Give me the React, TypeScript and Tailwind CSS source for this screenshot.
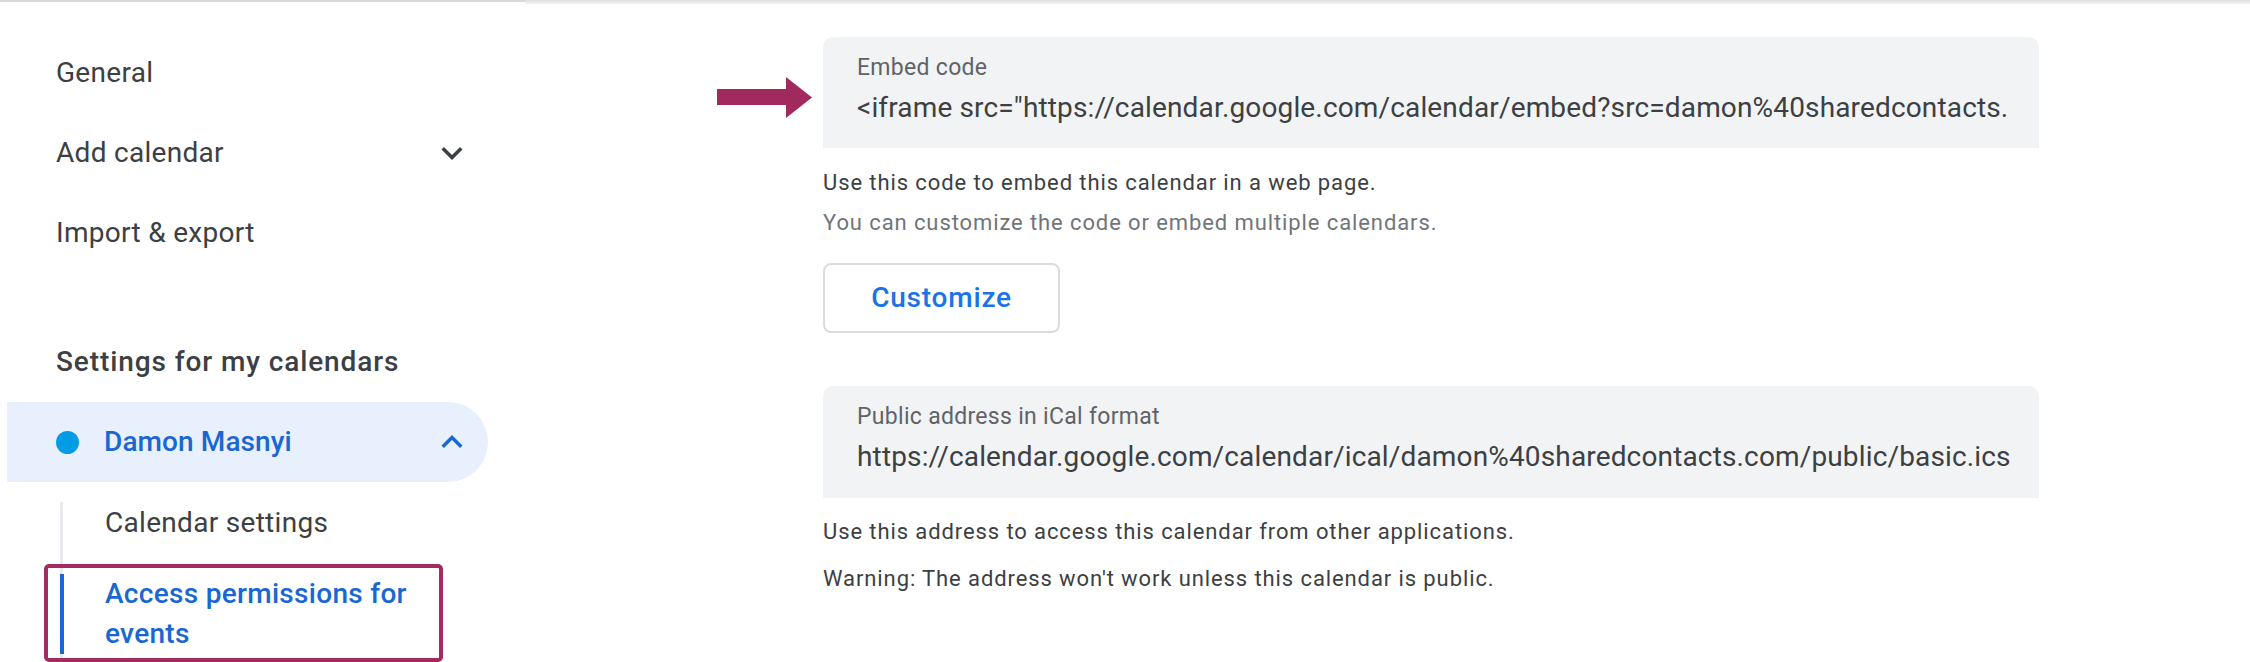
import React from "react";

const ChevronDown = ({ className }: { className?: string }) => (
  <svg viewBox="0 0 24 24" className={className} fill="currentColor">
    <path d="M16.59 8.59L12 13.17 7.41 8.59 6 10l6 6 6-6z" />
  </svg>
);

const ChevronUp = ({ className }: { className?: string }) => (
  <svg viewBox="0 0 24 24" className={className} fill="currentColor">
    <path d="M12 8l-6 6 1.41 1.41L12 10.83l4.59 4.58L18 14z" />
  </svg>
);

const Arrow = () => (
  <svg viewBox="0 0 95 41" className="w-[95px] h-[41px]">
    <rect x="0" y="12" width="70" height="16" fill="#a1295e" />
    <polygon points="69,0 95,20.5 69,41" fill="#a1295e" />
  </svg>
);

export default function App() {
  return (
    <div
      className="w-[2250px] h-[662px] bg-white overflow-hidden text-[#3c4043]"
      style={{ fontFamily: "Roboto, 'Liberation Sans', sans-serif" }}
    >
      <div className="flex h-[4px]">
        <div className="w-[525px] h-[2px] bg-[#d9d9dc]" />
        <div className="flex-1 h-[4px] bg-gradient-to-b from-[#dedee1] to-[#f4f4f6]" />
      </div>
      <div className="flex">
        {/* Left nav */}
        <div className="w-[823px] shrink-0 relative">
          <div className="w-[488px] pt-[29px] tracking-[0.3px]">
            <div className="h-[80px] flex items-center pl-[56px] text-[28px]">General</div>
            <div className="h-[80px] flex items-center justify-between pl-[56px] pr-[15px] text-[28px]">
              <span>Add calendar</span>
              <ChevronDown className="w-[42px] h-[42px] text-[#3c4043]" />
            </div>
            <div className="h-[80px] flex items-center pl-[56px] text-[28px]">Import &amp; export</div>
            <div className="h-[49px]" />
            <div className="h-[80px] flex items-center pl-[56px] text-[28px] font-medium tracking-[0.9px]">
              Settings for my calendars
            </div>
            <div className="ml-[7px] h-[80px] rounded-r-full bg-[#e8f0fe] flex items-center pl-[49px] pr-[15px]">
              <div className="w-[23px] h-[23px] rounded-full bg-[#039be5] shrink-0" />
              <span className="ml-[25px] text-[28px] font-medium text-[#1967d2] flex-1 tracking-[0.1px]">Damon Masnyi</span>
              <ChevronUp className="w-[42px] h-[42px] text-[#1967d2]" />
            </div>
            <div className="mt-[20px] ml-[60px] border-l-[3px] border-[#e8eaed] h-[200px]">
              <div className="h-[72px] pt-[1px] pl-[42px] text-[28px] leading-[40px]">Calendar settings</div>
              <div className="-ml-[3px] border-l-[4px] border-[#1967d2] pl-[41px] w-[380px] text-[28px] leading-[40px] font-medium text-[#1967d2]">
                Access permissions for events
              </div>
            </div>
          </div>
          <div className="absolute left-[44px] top-[560px] w-[399px] h-[98px] border-[4px] border-[#a32b5f] rounded-[5px]" />
        </div>

        {/* Right content */}
        <div className="w-[1216px] pt-[33px]">
          <div className="relative h-[111px] bg-[#f1f3f4] rounded-t-[10px] pl-[34px] pr-[20px] flex flex-col">
            <div className="absolute left-[-106px] top-[40px]">
              <Arrow />
            </div>
            <div className="mt-[18px] h-[26px] leading-[26px] text-[23px] tracking-[0.3px] text-[#5f6368]">Embed code</div>
            <div className="mt-[7px] h-[40px] leading-[40px] text-[28px] tracking-[0.15px] text-[#3c4043] whitespace-nowrap overflow-hidden">
              &lt;iframe src="https://calendar.google.com/calendar/embed?src=damon%40sharedcontacts.
            </div>
          </div>
          <div className="mt-[15px] text-[22px] leading-[40px] tracking-[0.9px] text-[#3c4043]">
            Use this code to embed this calendar in a web page.
          </div>
          <div className="text-[22px] leading-[40px] tracking-[0.9px] text-[#70757a]">
            You can customize the code or embed multiple calendars.
          </div>
          <div className="mt-[20px] w-[237px] h-[70px] border-[2px] border-[#dadce0] rounded-[8px] flex items-center justify-center text-[28px] tracking-[0.8px] font-medium text-[#1a73e8]">
            Customize
          </div>
          <div className="mt-[53px] h-[112px] bg-[#f1f3f4] rounded-t-[10px] pl-[34px] pr-[20px] flex flex-col">
            <div className="mt-[18px] h-[26px] leading-[26px] text-[23px] tracking-[0.3px] text-[#5f6368]">Public address in iCal format</div>
            <div className="mt-[7px] h-[40px] leading-[40px] text-[28px] tracking-[0.15px] text-[#3c4043] whitespace-nowrap overflow-hidden">
              https://calendar.google.com/calendar/ical/damon%40sharedcontacts.com/public/basic.ics
            </div>
          </div>
          <div className="mt-[10px] text-[22px] leading-[47px] tracking-[0.9px] text-[#3c4043]">
            Use this address to access this calendar from other applications.
          </div>
          <div className="text-[22px] leading-[47px] tracking-[0.9px] text-[#3c4043]">
            Warning: The address won't work unless this calendar is public.
          </div>
        </div>
      </div>
    </div>
  );
}
